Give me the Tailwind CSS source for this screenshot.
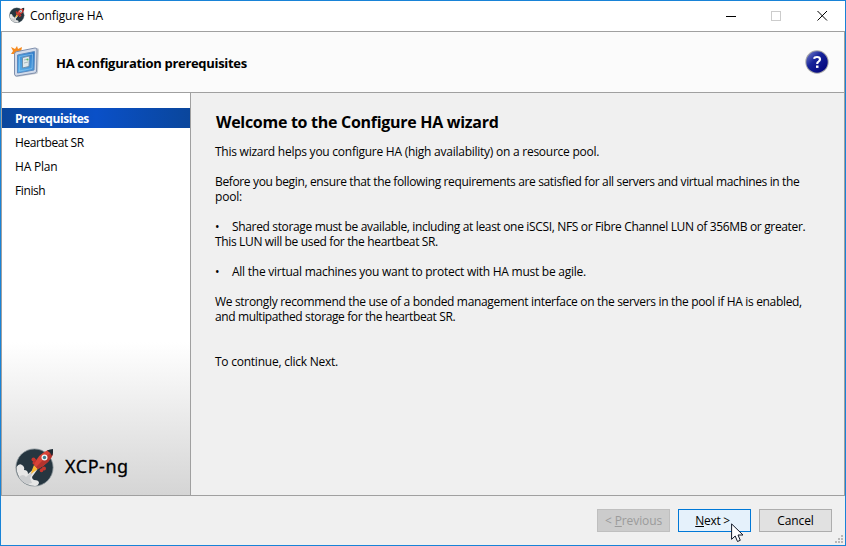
<!DOCTYPE html>
<html lang="en">
<head>
<meta charset="utf-8">
<title>Configure HA</title>
<script src="https://cdn.jsdelivr.net/npm/@tailwindcss/browser@4"></script>
</head>
<body class="overflow-hidden">
<svg class="hidden">
  <symbol id="rocket" viewBox="0 0 40 40">
    <circle cx="19.500" cy="20.500" r="18.600" fill="#263640" stroke="#8d979c" stroke-width=".8"/>
    <path d="M1.500 20Q4 16 7 18Q10 20 9 23Q13 23 13 27L20 21L22 23L17 30Q17 32 19 33Q24 33 24 36Q23 39 20 39A18.600 18.600 0 0 1 1.500 20Z" fill="#e6e6e6"/>
    <path d="M4 30Q8 26 11 30L20 22L15 31L17 36L13 37Q6 35 4 30Z" fill="#cbcdcf"/>
    <path d="M19 16L17 13L21 12L21 17ZM25 22L29 20L30 23L26 23Z" fill="#b9302b"/>
    <circle cx="18.500" cy="12.500" r="2" fill="#c5362e"/><circle cx="19" cy="16" r="1.500" fill="#c5362e"/><circle cx="29" cy="21.500" r="2" fill="#c5362e"/><circle cx="26.500" cy="23.500" r="1.800" fill="#c5362e"/>
    <path d="M19 18L23 22L20 24L16 27L17 23Z" fill="#fbb934"/>
    <path d="M19 18Q23 7 33 3L38 7Q35 16 23 22Z" fill="#d84337"/>
    <path d="M21 20L36 5L38 7Q35 16 23 22Z" fill="#b5342e"/>
    <path d="M32 3.500Q35 2 38 2Q38.500 6 37 9Q35 5 32 3.500Z" fill="#1d2a33"/>
    <circle cx="29.500" cy="10.500" r="3" fill="#f2f6f7"/><circle cx="29.500" cy="10.500" r="1.700" fill="#3c7e91"/>
  </symbol>
</svg>
<div class="w-[846px] h-[546px] border border-[#1883d7] bg-[#f0f0f0] flex flex-col font-['Open_Sans','Noto_Sans',sans-serif] text-[12px] leading-[15px] text-black whitespace-nowrap">
  <header class="h-[30px] shrink-0 bg-white flex items-center pl-2">
    <svg class="size-4 mb-0.5"><use href="#rocket"/></svg>
    <span class="ml-[5px] mb-0.5 tracking-[-0.1px]">Configure HA</span>
    <svg class="ml-auto mr-[15px] w-[104px] h-[12px] mb-0.5" viewBox="0 0 104 12" fill="none" shape-rendering="crispEdges">
      <path d="M0 7.500H10" stroke="#000"/><rect x="45.500" y="2.500" width="9" height="9" stroke="#ccc"/>
      <path d="M91.500 2L101 11.500M101 2L91.500 11.500" stroke="#000" shape-rendering="auto"/>
    </svg>
  </header>
  <main class="h-[465px] shrink-0 border border-[#a0a0a0] flex flex-col">
    <section class="h-[61px] shrink-0 bg-[#fbfbfb] border-b border-[#a0a0a0] flex items-center pl-[9px] pr-[15px]">
      <svg class="size-8" viewBox="0 0 32 32">
        <defs><linearGradient id="panel" x1="1" y1="0" x2="0" y2="1"><stop stop-color="#2b78c8"/><stop offset="1" stop-color="#5db4ec"/></linearGradient></defs>
        <path d="M0 1L4 3L6 0L7 3L11 1L10 6L7 10L3 12L3 8L0 8L2 5Z" fill="#f68a1e"/>
        <path d="M5 8Q4 6 6 6L26 2Q28 2 28 4L27 26Q27 28 25 28L6 31Q4 31 4 29Z" fill="#929dad" opacity=".5"/>
        <path d="M3.500 8Q3.500 6 5.500 5.700L24 2Q26 1.800 26 4L25.500 25Q25.500 26.500 24 27L5.500 30Q3.500 30 3.500 28Z" fill="#d2dbea" stroke="#8090ad"/>
        <path d="M6.500 9L23.500 5.500L23 24L6.500 27Z" fill="url(#panel)" stroke="#5b8ac0"/>
        <path d="M8.500 10.500L21.500 8L21 22.500L8.500 25Z" fill="none" stroke="#8cc4ee" stroke-width=".7"/>
        <path d="M11.500 11.500L18.500 10L18 20.500L11.500 22Z" fill="#dfe8ec" stroke="#6f8fac"/>
        <path d="M13 14L16 13.300M13 17L17 16" stroke="#a8b9bd"/><circle cx="16.500" cy="13.500" r="1" fill="#54be57"/>
      </svg>
      <h1 class="ml-[13px] mt-0.5 font-bold text-[13px] tracking-[-0.31px]">HA configuration prerequisites</h1>
      <svg class="ml-auto size-6" viewBox="0 0 24 24">
        <defs><linearGradient id="ball" x1="0" y1="0" x2="1" y2="1"><stop stop-color="#7d86cf"/><stop offset=".4" stop-color="#16239a"/><stop offset="1" stop-color="#000075"/></linearGradient></defs>
        <circle cx="12" cy="12" r="11.700" fill="#a6a6a8"/><circle cx="12" cy="12" r="10.700" fill="url(#ball)"/>
        <path d="M9 8.700Q9.500 7 12 7Q15 7 15 9.300Q15 10.700 13.500 11.600Q12.200 12.300 12.200 14" fill="none" stroke="#fff" stroke-width="2.200"/><rect x="11" y="15.500" width="2.500" height="2.400" fill="#fff"/>
      </svg>
    </section>
    <div class="flex flex-1 min-h-0">
      <nav class="w-[189px] shrink-0 border-r border-[#a0a0a0] bg-linear-to-b from-white from-[62%] to-[#d5d5d5] flex flex-col pt-[15px]">
        <div class="h-5 bg-linear-to-r from-[#0a469c] via-[#0a50c8] to-[#0a469c] text-white font-bold pl-[13px] pt-[3px] tracking-[-0.45px]">Prerequisites</div>
        <div class="flex flex-col gap-[9px] pl-[13px] pt-[7px] tracking-[-0.4px]"><div>Heartbeat SR</div><div class="tracking-[-0.2px]">HA Plan</div><div>Finish</div></div>
        <div class="mt-auto mb-[8px] pl-[13px] flex items-center"><svg class="size-10"><use href="#rocket"/></svg><span class="ml-[10px] mb-0.5 font-['Noto_Sans'] text-[18px] leading-6 tracking-[0.55px] [-webkit-text-stroke:0.3px_black]">XCP-ng</span></div>
      </nav>
      <article class="pl-[24px] pt-[19px]">
        <h2 class="font-bold text-[16px] leading-5 mb-[12px] ml-px tracking-[-0.29px]">Welcome to the Configure HA wizard</h2>
        <p class="mb-[15px] tracking-[-0.25px]">This wizard helps you configure HA (high availability) on a resource pool.</p>
        <div class="mb-[15px]"><p class="tracking-[-0.36px]">Before you begin, ensure that the following requirements are satisfied for all servers and virtual machines in the</p><p class="tracking-[-0.2px]">pool:</p></div>
        <div class="mb-[15px]"><p class="flex tracking-[-0.345px]"><span class="w-[17px]">•</span>Shared storage must be available, including at least one iSCSI, NFS or Fibre Channel LUN of 356MB or greater.</p><p class="tracking-[-0.35px]">This LUN will be used for the heartbeat SR.</p></div>
        <p class="flex mb-[15px] tracking-[-0.25px]"><span class="w-[17px]">•</span>All the virtual machines you want to protect with HA must be agile.</p>
        <div class="mb-[30px]"><p class="tracking-[-0.325px]">We strongly recommend the use of a bonded management interface on the servers in the pool if HA is enabled,</p><p class="tracking-[-0.38px]">and multipathed storage for the heartbeat SR.</p></div>
        <p class="tracking-[-0.24px]">To continue, click Next.</p>
      </article>
    </div>
  </main>
  <footer class="flex-1 flex gap-2 justify-end pt-[13px] pr-[13px] relative">
    <button class="w-[73px] h-[23px] border border-[#bfbfbf] bg-[#ccc] text-[#9b9b9b] tracking-[-0.1px]">&lt; <u>P</u>revious</button>
    <button class="w-[73px] h-[23px] border border-[#0078d7] bg-[#e5f1fb] pr-1 tracking-[-0.3px]"><u>N</u>ext &gt;</button>
    <button class="w-[73px] h-[23px] border border-[#adadad] bg-[#e1e1e1] tracking-[-0.1px]">Cancel</button>
    <svg class="absolute right-[2px] bottom-[2px] size-2" viewBox="0 0 8 8" fill="#b8b8b8"><path d="M6 0h2v2H6zM3 3h2v2H3zM6 3h2v2H6zM0 6h2v2H0zM3 6h2v2H3zM6 6h2v2H6z"/></svg>
    <svg class="absolute left-[730px] top-[27px] w-[13px] h-[20px]" viewBox="0 0 13 20"><path d="M.6.900V16.300L4.200 13L6.500 18.500L9.300 17.300L7 12H12Z" fill="#fff" stroke="#111827"/></svg>
  </footer>
</div>
</body>
</html>
